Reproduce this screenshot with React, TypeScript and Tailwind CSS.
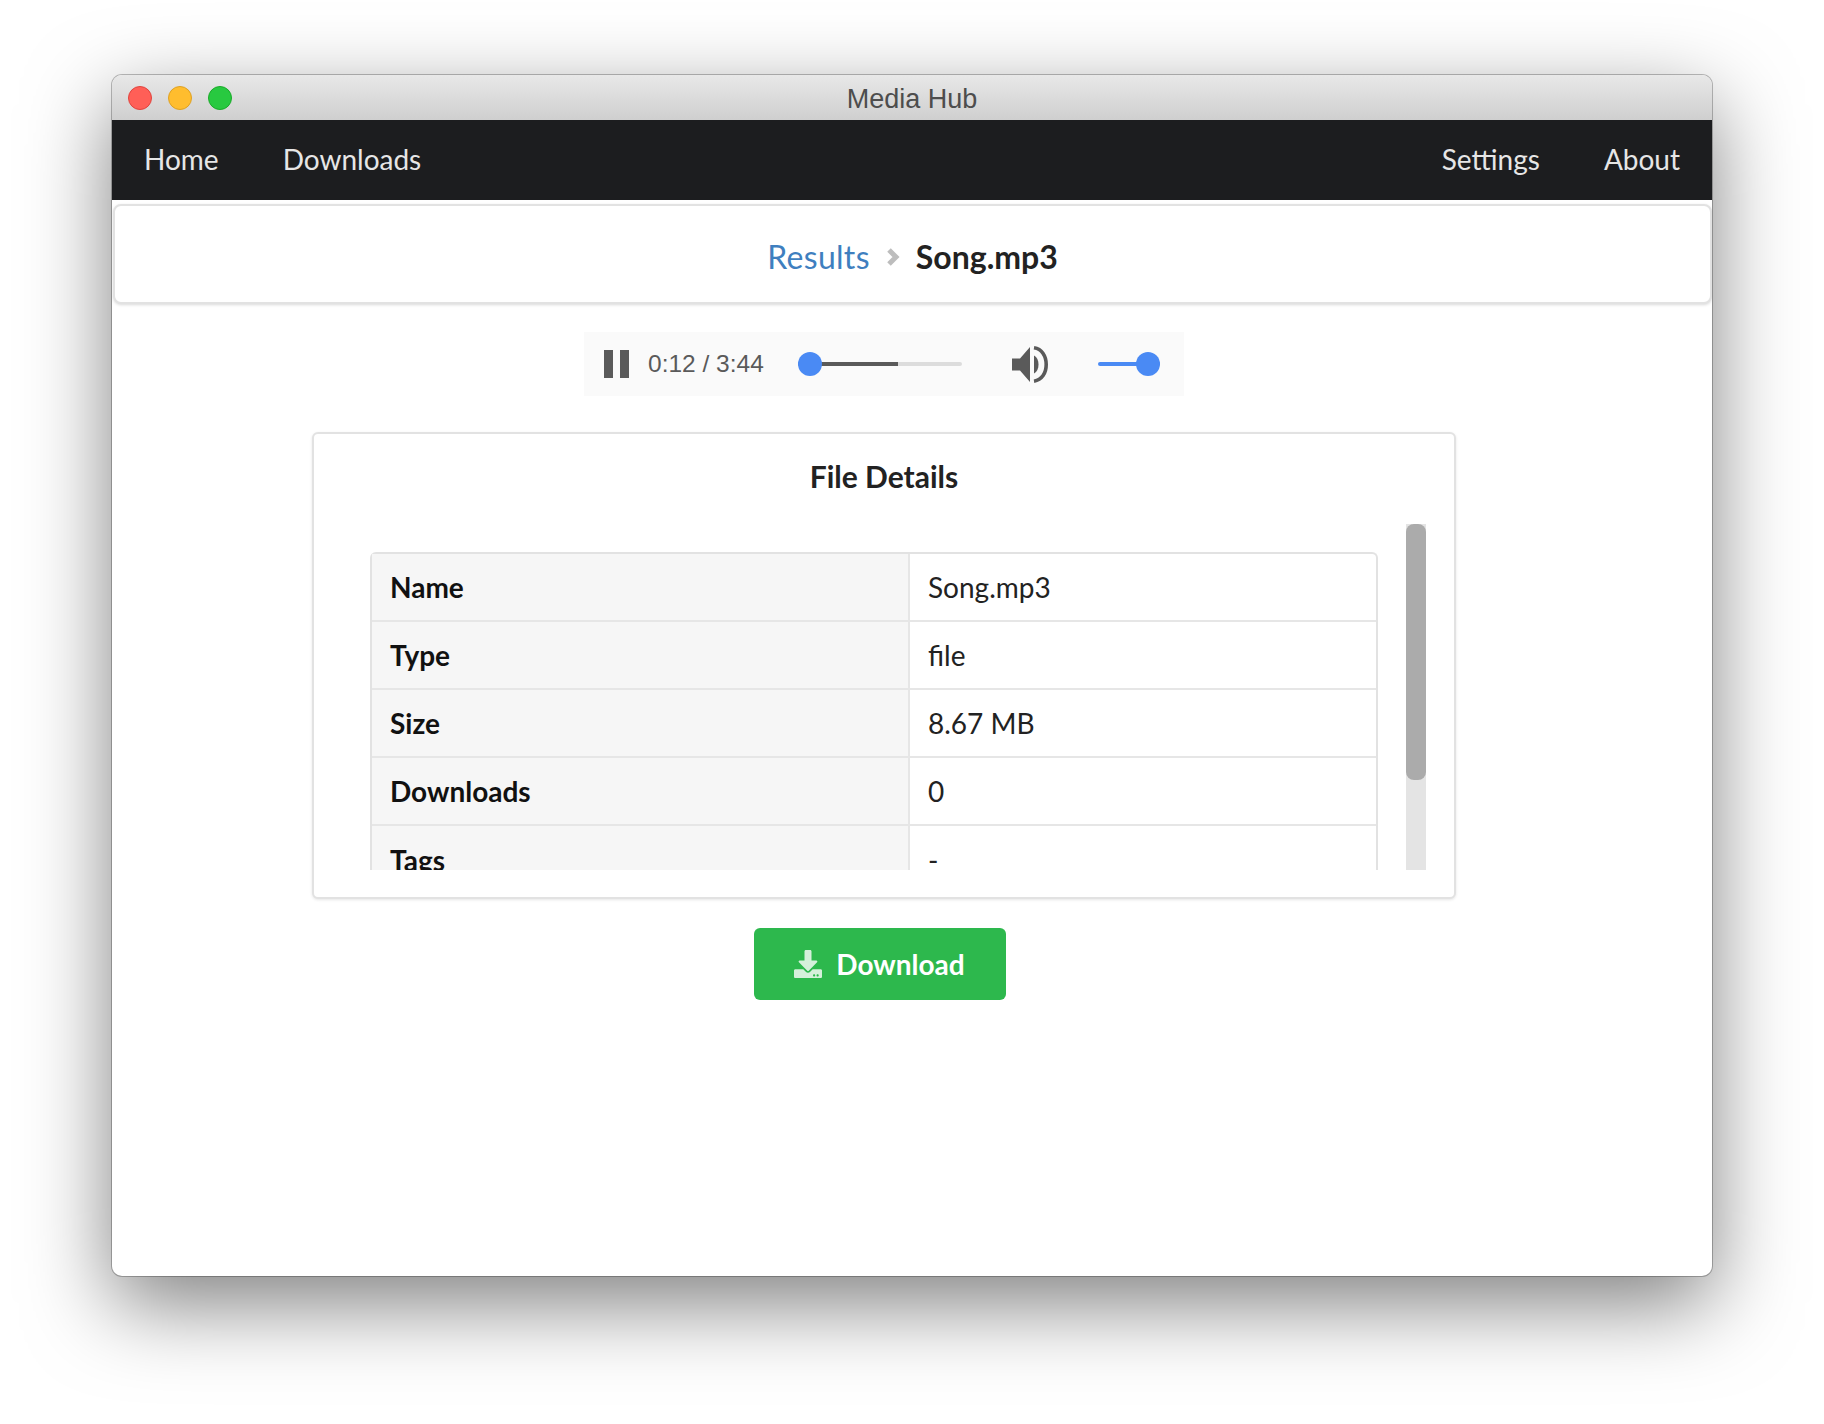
import { FaDownload } from 'react-icons/fa'

const rows = [
  ['Name', 'Song.mp3'],
  ['Type', 'file'],
  ['Size', '8.67 MB'],
  ['Downloads', '0'],
  ['Tags', '-'],
]

function Speaker() {
  return (
    <svg width="38" height="37" viewBox="0 0 38 37" className="shrink-0">
      <path d="M0 12.5h8L18 1v35L8 24.5H0z" fill="#5a5a5a" />
      <path d="M22 9.5C25 11 26.5 14.5 26.5 18.5S25 26 22 27.5Z" fill="#5a5a5a" />
      <path d="M22 1.8C30 3 34.2 10 34.2 18.5S30 34 22 35.2" fill="none" stroke="#5a5a5a" strokeWidth="3.6" />
    </svg>
  )
}

function NavLink({ children }: { children: string }) {
  return <a className="px-8 pb-px text-[28px] leading-[78px] text-[#e6e6e6]">{children}</a>
}

export default function App() {
  return (
    <div className="min-h-[1424px] bg-white pt-[75px] font-['Lato',sans-serif]">
      <div className="mx-auto flex h-[1201px] w-[1600px] flex-col overflow-hidden rounded-[10px] bg-white shadow-[0_28px_84px_0_rgba(0,0,0,0.5),0_0_0_1px_rgba(0,0,0,0.25)]">
        {/* title bar */}
        <div className="flex h-[45px] items-center bg-gradient-to-b from-[#e8e8e8] to-[#cfcfcf] px-4">
          <div className="flex flex-1 gap-4">
            <span className="size-6 rounded-full border border-[#e0443e] bg-[#ff5f57]" />
            <span className="size-6 rounded-full border border-[#dea123] bg-[#ffbd2e]" />
            <span className="size-6 rounded-full border border-[#1aab29] bg-[#28c940]" />
          </div>
          <span className="mt-[3px] font-['Liberation_Sans',sans-serif] text-[27px] text-[#4d4d4d]">Media Hub</span>
          <div className="flex-1" />
        </div>

        {/* nav */}
        <nav className="flex h-20 items-start justify-between bg-[#1c1d1f]">
          <div className="flex">
            <NavLink>Home</NavLink>
            <NavLink>Downloads</NavLink>
          </div>
          <div className="flex">
            <NavLink>Settings</NavLink>
            <NavLink>About</NavLink>
          </div>
        </nav>

        {/* breadcrumb */}
        <div className="ml-px mt-1 flex h-[100px] items-center justify-center gap-4 rounded-lg border-2 border-[#e2e2e2] bg-white pt-[5px] shadow-[0_1px_3px_rgba(0,0,0,0.15)]">
          <a className="text-[32px] tracking-[0.3px] text-[#3f7fbf]">Results</a>
          <svg width="14" height="20" viewBox="0 0 14 20">
            <path d="M3 3l7 7-7 7" fill="none" stroke="#bdbdbd" strokeWidth="5" />
          </svg>
          <span className="text-[32px] font-bold text-[#222]">Song.mp3</span>
        </div>

        <main className="flex flex-col items-center pl-[200px] pr-[256px]">
          {/* player */}
          <div className="mt-[28px] flex h-16 w-[600px] items-center bg-[#fafafa] pl-5 pr-6 font-['Liberation_Sans',sans-serif]">
            <div className="flex h-7 w-[25px] justify-between">
              <span className="w-[9px] bg-[#5a5a5a]" />
              <span className="w-[9px] bg-[#5a5a5a]" />
            </div>
            <span className="ml-[19px] w-[115px] whitespace-nowrap text-[24.5px] text-[#5a5a5a]">0:12 / 3:44</span>
            <div className="relative ml-[35px] h-1 w-[164px] rounded-sm bg-[#dcdcdc]">
              <div className="h-full w-[100px] rounded-l-sm bg-[#5a5a5a]" />
              <span className="absolute -top-[10px] left-0 size-6 rounded-full bg-[#4a8af4]" />
            </div>
            <div className="ml-[50px]">
              <Speaker />
            </div>
            <div className="relative ml-[48px] h-1 w-[62px] rounded-sm bg-[#4a8af4]">
              <span className="absolute -top-[10px] right-0 size-6 rounded-full bg-[#4a8af4]" />
            </div>
          </div>

          {/* details */}
          <section className="mt-[36px] w-full rounded-md border-2 border-[#e2e2e2] bg-white pb-[27px] pt-[22px] shadow-[0_1px_3px_rgba(0,0,0,0.1)]">
            <h2 className="text-center text-[30px] font-bold leading-10 text-[#222]">File Details</h2>
            <div className="mt-[28px] flex h-[346px] justify-between pl-[56px] pr-[28px]">
              <div className="h-full w-[1008px] overflow-hidden pt-7">
                <div className="rounded-t-md border-x-2 border-t-2 border-[#e2e2e2]">
                  {rows.map(([k, v], i) => (
                    <div key={k} className={`flex h-[68px] text-[28px] ${i < rows.length - 1 ? 'border-b-2 border-[#e6e6e6]' : ''}`}>
                      <div className="flex w-[538px] items-center border-r-2 border-[#e6e6e6] bg-[#f6f6f6] pl-[18px] font-bold text-[#111]">{k}</div>
                      <div className="flex flex-1 items-center pl-[18px] text-[#222]">{v}</div>
                    </div>
                  ))}
                </div>
              </div>
              <div className="h-full w-5 bg-[#e4e4e4]">
                <div className="h-[256px] rounded-lg bg-[#ababab]" />
              </div>
            </div>
          </section>

          {/* download */}
          <button className="mr-[9px] mt-[29px] flex h-[72px] w-[252px] items-center justify-center gap-[14px] rounded-md bg-[#2db84d] pb-px text-[28px] font-bold text-white">
            <FaDownload className="text-[28px] opacity-80" />
            Download
          </button>
        </main>
      </div>
    </div>
  )
}
